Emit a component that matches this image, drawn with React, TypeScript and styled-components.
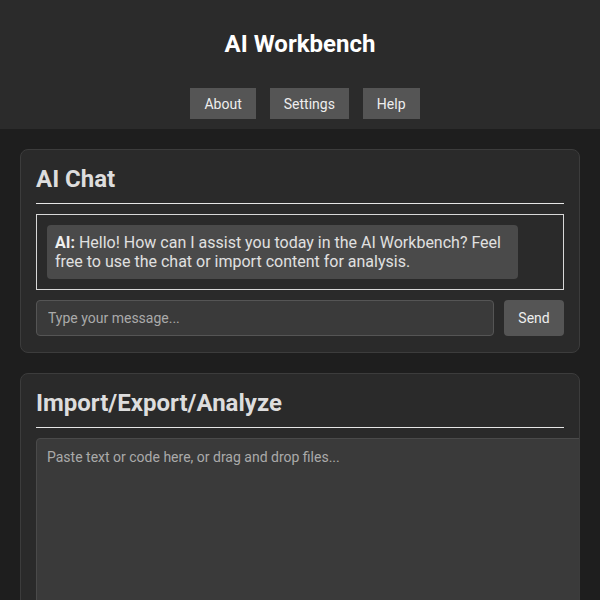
import styled, { createGlobalStyle } from "styled-components";

const GlobalStyle = createGlobalStyle`
  html, body {
    margin: 0;
    padding: 0;
    background: #1e1e1e;
    color: #e0e0e0;
    font-family: Roboto, "Liberation Sans", sans-serif;
  }
  * {
    box-sizing: border-box;
  }
`;

export default function App() {
  return (
    <>
      <GlobalStyle />
      <Header>
        <Title>AI Workbench</Title>
        <Nav>
          <NavButton>About</NavButton>
          <NavButton>Settings</NavButton>
          <NavButton>Help</NavButton>
        </Nav>
      </Header>
      <Main>
        <Card>
          <CardTitle>AI Chat</CardTitle>
          <ChatBox>
            <Bubble>
              <strong>AI:</strong> Hello! How can I assist you today in the AI
              Workbench? Feel free to use the chat or import content for
              analysis.
            </Bubble>
          </ChatBox>
          <InputRow>
            <MessageInput placeholder="Type your message..." />
            <SendButton>Send</SendButton>
          </InputRow>
        </Card>
        <Card>
          <CardTitle>Import/Export/Analyze</CardTitle>
          <ContentArea placeholder="Paste text or code here, or drag and drop files..." />
        </Card>
      </Main>
    </>
  );
}

const Header = styled.header`
  background: #2b2b2b;
  padding: 30px 0 10px;
  display: flex;
  flex-direction: column;
  align-items: center;
`;

const Title = styled.h1`
  margin: 0;
  font-size: 24px;
  line-height: 28px;
  font-weight: 700;
  color: #fff;
`;

const Nav = styled.nav`
  display: flex;
  gap: 14px;
  margin-top: 30px;
  padding-left: 10px;
`;

const NavButton = styled.button`
  background: #555;
  color: #eee;
  border: none;
  height: 31px;
  padding: 0 14px;
  font-family: inherit;
  font-size: 14px;
  cursor: pointer;
`;

const Main = styled.main`
  padding: 20px;
  display: flex;
  flex-direction: column;
  gap: 20px;
`;

const Card = styled.section`
  background: #2a2a2a;
  border: 1px solid #3c3c3c;
  border-radius: 8px;
  padding: 15px 15px 16px;
  overflow: hidden;
`;

const CardTitle = styled.h2`
  margin: 0 0 10px;
  padding-bottom: 10px;
  font-size: 24px;
  line-height: 28px;
  font-weight: 700;
  color: #ddd;
  border-bottom: 1px solid #e6e6e6;
`;

const ChatBox = styled.div`
  border: 1px solid #d8d8d8;
  padding: 10px;
`;

const Bubble = styled.div`
  display: inline-block;
  max-width: 93%;
  background: #4a4a4a;
  border-radius: 4px;
  padding: 8px;
  font-size: 16px;
  line-height: 19px;
  color: #e0e0e0;

  strong {
    color: #f0f0f0;
  }
`;

const InputRow = styled.div`
  display: flex;
  gap: 10px;
  margin-top: 10px;
`;

const MessageInput = styled.input`
  flex: 1;
  height: 36px;
  background: #3a3a3a;
  border: 1px solid #555;
  border-radius: 4px;
  padding: 0 11px;
  font-family: inherit;
  font-size: 14px;
  color: #eee;

  &::placeholder {
    color: #aaa;
  }
`;

const SendButton = styled.button`
  width: 60px;
  height: 36px;
  background: #555;
  color: #eee;
  border: none;
  border-radius: 4px;
  font-family: inherit;
  font-size: 14px;
`;

const ContentArea = styled.textarea`
  display: block;
  box-sizing: content-box;
  width: 100%;
  height: 200px;
  background: #3a3a3a;
  border: 1px solid #4a4a4a;
  border-radius: 4px;
  padding: 10px;
  font-family: inherit;
  font-size: 14px;
  line-height: 17px;
  color: #eee;
  resize: vertical;

  &::placeholder {
    color: #aaa;
  }
`;
